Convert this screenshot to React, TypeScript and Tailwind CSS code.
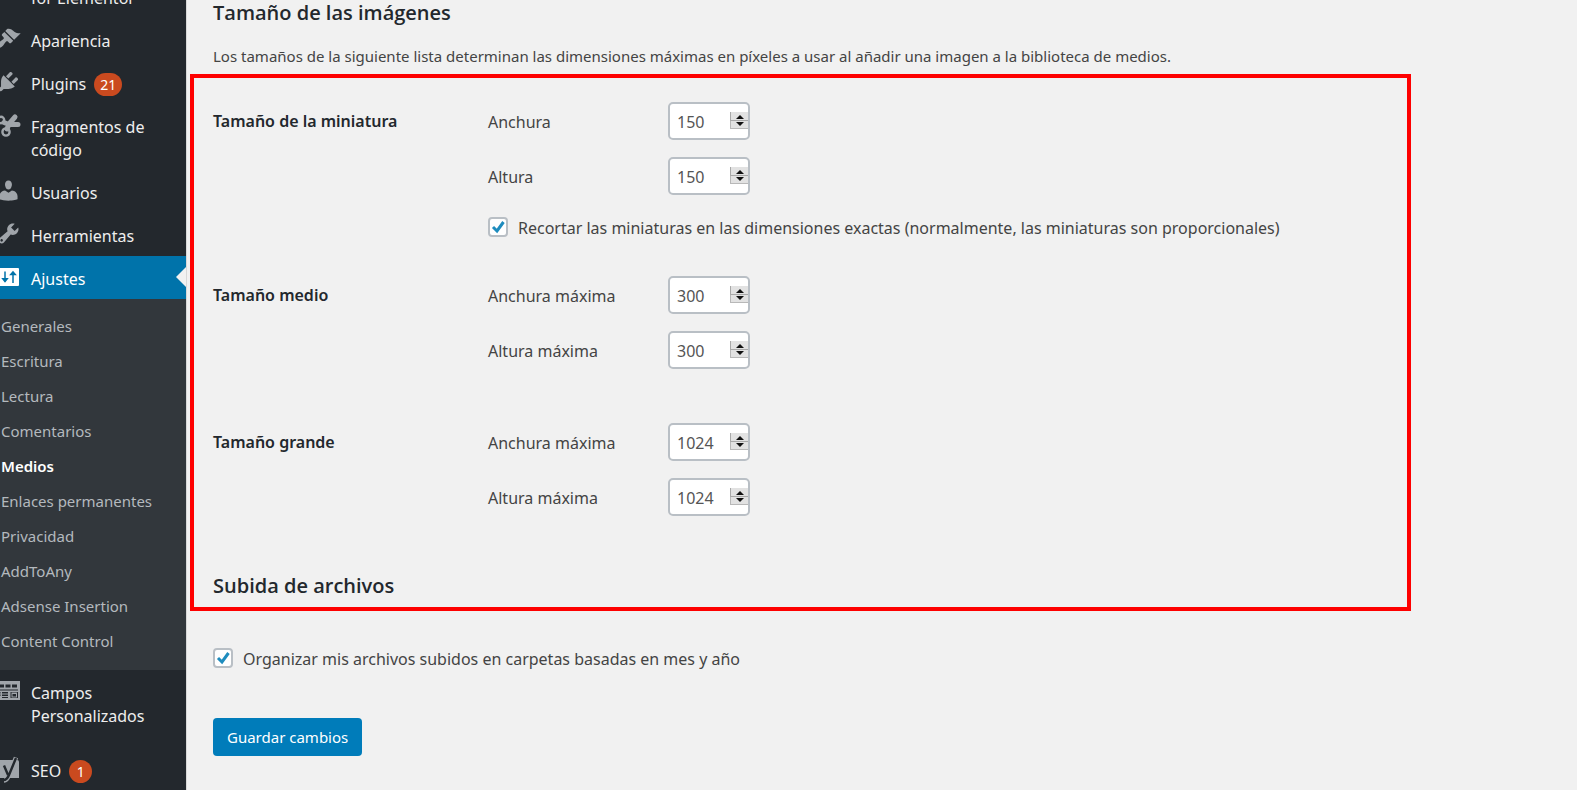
import React from "react";

const icons = {
  brush:
    "M14.48 11.06L7.41 3.99l1.5-1.5c.5-.56 2.3-.47 3.51.32 1.21.8 1.43 1.28 2.91 2.1 1.18.64 2.45 1.26 4.45.85zm-.71.71L6.7 4.7 4.93 6.47c-.39.39-.39 1.02 0 1.41l1.06 1.06c.39.39.39 1.03 0 1.42-.6.6-1.43 1.11-2.21 1.69-.35.26-.7.53-1.01.84C1.43 14.23.4 16.08 1.4 17.07c.99 1 2.84-.03 4.18-1.36.31-.31.58-.66.85-1.02.57-.78 1.08-1.61 1.69-2.21.39-.39 1.02-.39 1.41 0l1.06 1.06c.39.39 1.02.39 1.41 0z",
  plug:
    "M13.11 4.36L9.87 7.6 8 5.73l3.24-3.24c.35-.34 1.05-.2 1.56.32.52.51.66 1.21.31 1.55zm-8 1.77l.91-1.12 9.01 9.01-1.19.84c-.71.71-2.63 1.16-3.82 1.16H6.14L4.9 17.26c-.59.59-1.54.59-2.12 0-.59-.58-.59-1.53 0-2.12l1.24-1.24v-3.88c0-1.13.4-3.19 1.09-3.89zm7.26 3.97l3.24-3.24c.34-.35 1.04-.21 1.55.31.52.51.66 1.21.31 1.55l-3.24 3.25z",
  user:
    "M10 9.25c-2.27 0-2.73-3.44-2.73-3.44C7 4.02 7.82 2 9.97 2c2.16 0 2.98 2.02 2.71 3.81 0 0-.41 3.44-2.68 3.44zm0 2.57L12.72 10c2.39 0 4.52 2.33 4.52 4.53v2.49s-3.65 1.13-7.24 1.13c-3.65 0-7.24-1.13-7.24-1.13v-2.49c0-2.25 1.94-4.48 4.47-4.48z",
  wrench:
    "M16.68 9.77c-1.34 1.34-3.3 1.67-4.95.99l-5.41 6.52c-.99.99-2.59.99-3.58 0s-.99-2.59 0-3.57l6.52-5.42c-.68-1.65-.35-3.61.99-4.95 1.28-1.28 3.12-1.62 4.72-1.06l-2.89 2.89 2.82 2.82 2.86-2.87c.53 1.58.18 3.39-1.08 4.65zM3.81 16.21c.4.39 1.04.39 1.43 0 .4-.4.4-1.04 0-1.43-.39-.4-1.03-.4-1.43 0-.39.39-.39 1.03 0 1.43z",
};

function PathIcon({ d }: { d: string }) {
  return (
    <svg viewBox="0 0 20 20" className="size-[25px]" fill="currentColor" aria-hidden="true">
      <path d={d} />
    </svg>
  );
}

function ScissorsIcon() {
  return (
    <svg viewBox="0 0 25 25" className="size-[25px]" fill="none" stroke="currentColor" aria-hidden="true">
      <circle cx="5" cy="8" r="3.2" strokeWidth="2.400" />
      <circle cx="10" cy="20" r="3.600" strokeWidth="2.400" />
      <path d="M8 10.500L13 12.500L22 12.500M11 17L13 12L19 5" strokeWidth="5" strokeLinecap="round" strokeLinejoin="round" />
    </svg>
  );
}

function SlidersIcon() {
  return (
    <svg viewBox="0 0 25 25" className="size-[25px]" fill="currentColor" aria-hidden="true">
      <rect x="1" y="4" width="22" height="18" rx="1" />
      <g stroke="#0073aa" strokeWidth="1.500" fill="#0073aa">
        <path d="M9 7.500v10M17 19V9" />
        <path d="M6.800 14.800h4.400L9 17.500zM14.800 10.500h4.400L17 8z" />
      </g>
    </svg>
  );
}

function FieldsIcon() {
  return (
    <svg viewBox="0 0 25 25" className="size-[25px]" aria-hidden="true">
      <rect x="-1" y="3" width="25" height="19" fill="currentColor" />
      <g fill="#23282d">
        <path d="M3 6.500h5v3H3zM9.500 6.500h5v3h-5zM16 6.500h5v3h-5z" />
        <path d="M1 11.500h21v1H1zM6 14h6v1.500H6zM6 16.500h6V18H6zM6 19h6v1H6zM3 14h1.500v1.500H3zM3 16.500h1.500V18H3zM14.500 14H22v6h-7.500z" />
      </g>
      <path d="M15.500 14.500h5.500v5h-5.500z" fill="currentColor" />
      <path d="M16.500 16h3.500v2.500h-3.500z" fill="#23282d" />
    </svg>
  );
}

function SeoIcon() {
  return (
    <svg viewBox="0 0 25 27" className="h-[27px] w-[25px]" aria-hidden="true">
      <path d="M0 6q0-2 2-2h19q2 0 2 2v16H0z" fill="currentColor" />
      <path d="M8 9.500l4 9.500M20 1.500L13 19q-2 5.500-5 5.500" fill="none" stroke="currentColor" strokeWidth="4.500" />
      <path d="M8 9.500l4 9.500M20 2L13 19q-2 5-5.500 5" fill="none" stroke="#23282d" strokeWidth="2.400" />
    </svg>
  );
}

function Badge({ children }: { children: React.ReactNode }) {
  return (
    <span className="flex h-[23px] min-w-[23px] items-center justify-center rounded-full bg-[#ca4a1f] px-1.5 text-sm text-white">
      {children}
    </span>
  );
}

function MenuItem({
  icon,
  label,
  badge,
  active = false,
}: {
  icon?: React.ReactNode;
  label: React.ReactNode;
  badge?: string;
  active?: boolean;
}) {
  return (
    <li>
      <a
        href="#"
        className={
          active
            ? "relative flex bg-[#0073aa] pb-2 pt-3 text-white"
            : "flex pb-2 pt-3 text-[#eee]"
        }
      >
        <span className={active ? "-ml-1 -mt-1 w-[35px] shrink-0 text-white" : "-ml-1 -mt-1 w-[35px] shrink-0 text-[#a0a5aa]"}>
          {icon}
        </span>
        <span className="flex items-start gap-2 leading-[23px]">
          {label}
          {badge && <Badge>{badge}</Badge>}
        </span>
        {active && (
          <svg viewBox="0 0 10 20" className="absolute right-0 top-[11px] h-5 w-2.5" fill="#f1f1f1" aria-hidden="true">
            <path d="M10 0v20L0 10z" />
          </svg>
        )}
      </a>
    </li>
  );
}

const submenu = [
  "Generales",
  "Escritura",
  "Lectura",
  "Comentarios",
  "Medios",
  "Enlaces permanentes",
  "Privacidad",
  "AddToAny",
  "Adsense Insertion",
  "Content Control",
];

function Sidebar() {
  return (
    <nav className="w-[186px] shrink-0 overflow-hidden bg-[#23282d] text-base" aria-label="Menú principal">
      <ul className="-mt-[25px]">
        <MenuItem label="for Elementor" />
        <MenuItem icon={<PathIcon d={icons.brush} />} label="Apariencia" />
        <MenuItem icon={<PathIcon d={icons.plug} />} label="Plugins" badge="21" />
        <MenuItem icon={<ScissorsIcon />} label={<>Fragmentos de<br />código</>} />
        <MenuItem icon={<PathIcon d={icons.user} />} label="Usuarios" />
        <MenuItem icon={<PathIcon d={icons.wrench} />} label="Herramientas" />
        <MenuItem active icon={<SlidersIcon />} label="Ajustes" />
        <li className="bg-[#32373c] pb-[11px] pt-2.5">
          <ul>
            {submenu.map((name) => (
              <li key={name}>
                <a
                  href="#"
                  className={
                    name === "Medios"
                      ? "block pl-px text-[15px] font-semibold leading-[35px] text-white"
                      : "block pl-px text-[15px] leading-[35px] text-[#b4b9be]"
                  }
                >
                  {name}
                </a>
              </li>
            ))}
          </ul>
        </li>
        <MenuItem icon={<FieldsIcon />} label={<>Campos<br />Personalizados</>} />
        <li className="h-3" aria-hidden="true" />
        <MenuItem icon={<SeoIcon />} label="SEO" badge="1" />
      </ul>
    </nav>
  );
}

function NumberField({ id, label, initial }: { id: string; label: string; initial: number }) {
  const [value, setValue] = React.useState(initial);
  return (
    <div className="flex items-center">
      <label htmlFor={id} className="w-[180px] pt-0.5">{label}</label>
      <div className="relative">
        <input
          id={id}
          type="text"
          inputMode="numeric"
          value={value}
          onChange={(e) => setValue(Number(e.target.value) || 0)}
          className="block h-[38px] w-[82px] rounded-[5px] border-2 border-[#b9bfc5] bg-white pl-[7px] pt-0.5 text-base text-[#555]"
        />
        <div className="absolute right-0.5 top-2.5 flex w-[18px] flex-col bg-[#a8a8a8]">
          <button type="button" aria-label="Aumentar" onClick={() => setValue(value + 1)} className="flex h-2 justify-center border-l border-[#a8a8a8] bg-[#e2e2e2] pt-[3px]">
            <svg viewBox="0 0 8 4" className="h-1 w-2" fill="#111"><path d="M4 0l4 4H0z" /></svg>
          </button>
          <button type="button" aria-label="Disminuir" onClick={() => setValue(value - 1)} className="mt-px flex h-2 justify-center border-b border-l border-[#b8b8b8] bg-[#e2e2e2] pt-px">
            <svg viewBox="0 0 8 4" className="h-1 w-2" fill="#111"><path d="M0 0h8L4 4z" /></svg>
          </button>
        </div>
      </div>
    </div>
  );
}

function Check({ id, label }: { id: string; label: string }) {
  return (
    <div className="flex h-[29px] items-center gap-2.5">
      <span className="relative flex">
        <input
          id={id}
          type="checkbox"
          defaultChecked
          className="peer size-5 appearance-none rounded border-2 border-[#b9bfc5] bg-white"
        />
        <svg viewBox="0 0 20 20" className="pointer-events-none absolute inset-0 hidden size-5 peer-checked:block" fill="none" stroke="#1e8cbe" strokeWidth="3" aria-hidden="true">
          <path d="M5 10l4 4 6.500-9" />
        </svg>
      </span>
      <label htmlFor={id} className="pt-0.5">{label}</label>
    </div>
  );
}

function SizeGroup({ id, title, children, className }: { id: string; title: string; children: React.ReactNode; className: string }) {
  return (
    <div role="group" aria-labelledby={id} className={className}>
      <h3 id={id} className="w-[275px] shrink-0 font-semibold leading-[38px] text-[#23282d]">{title}</h3>
      <div className="flex flex-col gap-[17px]">{children}</div>
    </div>
  );
}

export default function App() {
  return (
    <div className="flex h-screen overflow-hidden bg-[#f1f1f1] font-['Noto_Sans','Open_Sans',sans-serif] text-base text-[#444]">
      <Sidebar />
      <main className="min-w-0 grow border-l border-[#d8d8d8] pl-[3px]">
        <form onSubmit={(e) => e.preventDefault()}>
          <h2 className="pl-[23px] font-['Open_Sans','Noto_Sans',sans-serif] text-xl font-semibold leading-[26px] text-[#23282d]">Tamaño de las imágenes</h2>
          <p className="mb-[5px] mt-[18px] pl-[23px] text-[15px] leading-[25px]">
            Los tamaños de la siguiente lista determinan las dimensiones máximas en píxeles a usar al añadir una imagen a la biblioteca de medios.
          </p>
          <section className="mr-[166px] border-4 border-[#fe0000] pb-[7px] pl-[19px] pt-6">
            <SizeGroup id="thumb-title" title="Tamaño de la miniatura" className="flex">
              <NumberField id="thumb-w" label="Anchura" initial={150} />
              <NumberField id="thumb-h" label="Altura" initial={150} />
              <Check id="crop" label="Recortar las miniaturas en las dimensiones exactas (normalmente, las miniaturas son proporcionales)" />
            </SizeGroup>
            <SizeGroup id="medium-title" title="Tamaño medio" className="mt-[35px] flex">
              <NumberField id="medium-w" label="Anchura máxima" initial={300} />
              <NumberField id="medium-h" label="Altura máxima" initial={300} />
            </SizeGroup>
            <SizeGroup id="large-title" title="Tamaño grande" className="mt-[54px] flex">
              <NumberField id="large-w" label="Anchura máxima" initial={1024} />
              <NumberField id="large-h" label="Altura máxima" initial={1024} />
            </SizeGroup>
            <h2 className="mt-[56px] font-['Open_Sans','Noto_Sans',sans-serif] text-xl font-semibold leading-[28px] text-[#23282d]">Subida de archivos</h2>
          </section>
          <div className="pl-[23px] pt-8">
            <Check id="organize" label="Organizar mis archivos subidos en carpetas basadas en mes y año" />
            <button type="submit" className="mt-[46px] h-[38px] rounded bg-[#007cba] px-3.5 text-[15px] text-white">
              Guardar cambios
            </button>
          </div>
        </form>
      </main>
    </div>
  );
}
